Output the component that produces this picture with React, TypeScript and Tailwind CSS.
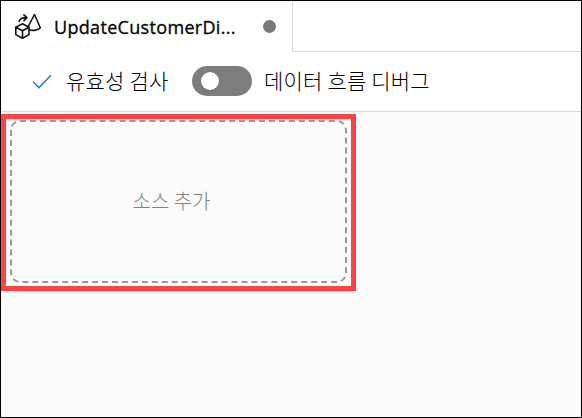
function DataFlowIcon() {
  return (
    <svg className="-mt-[2px] h-7 w-7 shrink-0" viewBox="0 0 28 28" fill="none" stroke="#111" strokeWidth="1.6" strokeLinejoin="round" strokeLinecap="round">
      <path d="M1.8 15.2 8.5 11.8 15 15.2V22.6l-6.5 3.6L1.8 22.6ZM1.8 15.2 8.5 18.7 15 15.2M8.5 18.7v7.5" />
      <path d="M15.4 17.8c3.5 1.2 8.7.4 10.9-2.1L20.5 2.5 14.5 14" />
      <path d="M5 9.4C6 6.7 8.5 5.5 12.5 5.6M9.9 2.8 12.9 5.6 9.9 8.6" />
    </svg>
  );
}

export default function App() {
  return (
    <div className="flex h-[418px] w-[582px] flex-col overflow-hidden border border-black bg-[#fafafa] font-['Noto_Sans','Noto_Sans_CJK_KR',sans-serif] text-black">
      <div className="flex h-[51px] shrink-0 bg-white">
        <div className="flex w-[292px] shrink-0 items-center border-r border-[#d8d8d8] pl-[13px]">
          <DataFlowIcon />
          <span className="ml-3 w-[184px] whitespace-nowrap font-['Open_Sans',sans-serif] text-[18px] font-medium leading-6 tracking-[0.32px] [-webkit-text-stroke:0.35px_#111]">UpdateCustomerDi...</span>
          <span className="ml-[25px] h-[13px] w-[13px] shrink-0 rounded-full bg-[#7a7a7a]" />
        </div>
        <div className="flex-1 border-b border-[#d8d8d8]" />
      </div>
      <div className="flex h-[60px] shrink-0 items-center border-b border-[#d8d8d8] bg-white pl-[31px]">
        <svg className="-mt-[2px] h-5 w-5 shrink-0" viewBox="0 0 20 20" fill="none" stroke="#2580d8" strokeWidth="1.6">
          <path d="m1 10.5 6 6L19 4.2" />
        </svg>
        <span className="-mt-[2px] ml-[14px] w-[104px] whitespace-nowrap font-['Noto_Sans_CJK_KR',sans-serif] text-[21px] font-light tracking-[0.2px]">유효성 검사</span>
        <div className="-mt-px ml-[22px] flex h-[30px] w-[60px] shrink-0 items-center rounded-full bg-[#7d7d7d] pl-[9px]">
          <span className="h-[18px] w-[18px] rounded-full bg-white shadow-sm" />
        </div>
        <span className="-mt-[2px] ml-[12px] whitespace-nowrap font-['Noto_Sans_CJK_KR',sans-serif] text-[21px] font-light tracking-[0.2px]">데이터 흐름 디버그</span>
      </div>
      <div className="flex-1 pt-[2px]">
        <div className="h-[177px] w-[355px] border-5 border-[#ff4242] pt-[1px] pl-[4px]">
          <div className="flex h-[163px] w-[337px] items-center justify-center rounded-[10px] border-2 border-dashed border-[#999999] pr-[14px] pb-[2px]">
            <span className="font-['Noto_Sans_CJK_KR',sans-serif] text-[20px] font-light text-[#808080]">소스 추가</span>
          </div>
        </div>
      </div>
    </div>
  );
}
